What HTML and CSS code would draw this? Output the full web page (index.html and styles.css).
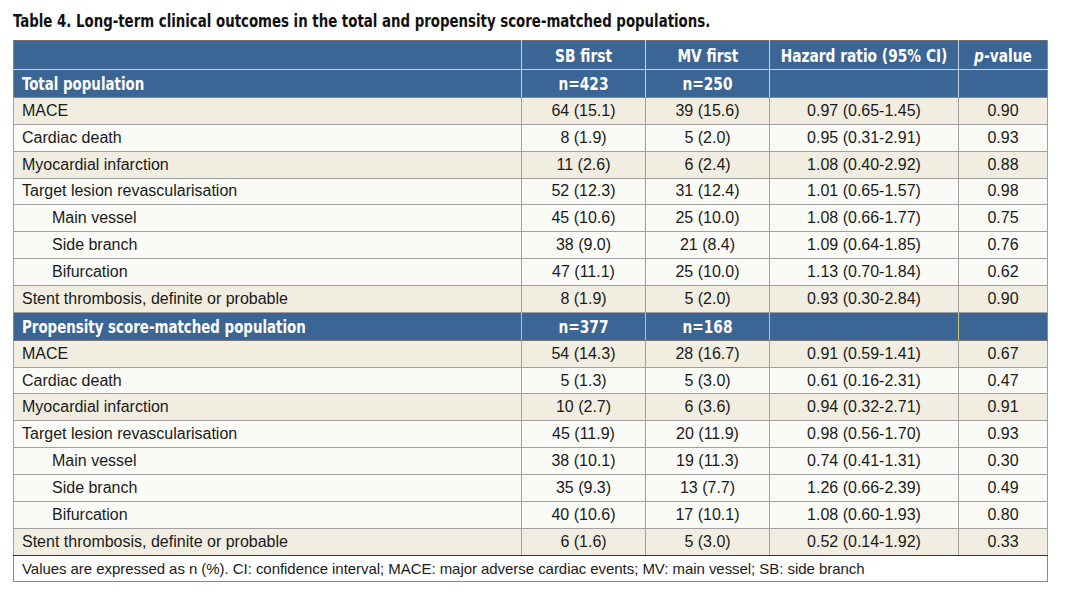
FILE: index.html
```html
<!DOCTYPE html>
<html lang="en">
<head>
<meta charset="utf-8">
<title>Table 4</title>
<link rel="stylesheet" href="styles.css">
</head>
<body>
<div class="page">
  <h1 class="caption"><span class="nar">Table 4. Long-term clinical outcomes in the total and propensity score-matched populations.</span></h1>
  <table class="outcomes">
    <colgroup>
      <col class="c-label"><col class="c-sb"><col class="c-mv"><col class="c-hr"><col class="c-p">
    </colgroup>
    <thead>
      <tr class="head">
        <th></th><th><span class="nar">SB first</span></th><th><span class="nar">MV first</span></th><th><span class="nar">Hazard ratio (95% CI)</span></th><th><span class="nar"><i>p</i>-value</span></th>
      </tr>
    </thead>
    <tbody>
      <tr class="group g1"><th class="lbl"><span class="nar">Total population</span></th><th><span class="nar">n=423</span></th><th><span class="nar">n=250</span></th><th></th><th></th></tr>
      <tr class="beige"><td class="lbl">MACE</td><td>64 (15.1)</td><td>39 (15.6)</td><td>0.97 (0.65-1.45)</td><td>0.90</td></tr>
      <tr class="white"><td class="lbl">Cardiac death</td><td>8 (1.9)</td><td>5 (2.0)</td><td>0.95 (0.31-2.91)</td><td>0.93</td></tr>
      <tr class="beige"><td class="lbl">Myocardial infarction</td><td>11 (2.6)</td><td>6 (2.4)</td><td>1.08 (0.40-2.92)</td><td>0.88</td></tr>
      <tr class="white"><td class="lbl">Target lesion revascularisation</td><td>52 (12.3)</td><td>31 (12.4)</td><td>1.01 (0.65-1.57)</td><td>0.98</td></tr>
      <tr class="white"><td class="lbl sub">Main vessel</td><td>45 (10.6)</td><td>25 (10.0)</td><td>1.08 (0.66-1.77)</td><td>0.75</td></tr>
      <tr class="white"><td class="lbl sub">Side branch</td><td>38 (9.0)</td><td>21 (8.4)</td><td>1.09 (0.64-1.85)</td><td>0.76</td></tr>
      <tr class="white"><td class="lbl sub">Bifurcation</td><td>47 (11.1)</td><td>25 (10.0)</td><td>1.13 (0.70-1.84)</td><td>0.62</td></tr>
      <tr class="beige"><td class="lbl">Stent thrombosis, definite or probable</td><td>8 (1.9)</td><td>5 (2.0)</td><td>0.93 (0.30-2.84)</td><td>0.90</td></tr>
      <tr class="group g2"><th class="lbl"><span class="nar">Propensity score-matched population</span></th><th><span class="nar">n=377</span></th><th><span class="nar">n=168</span></th><th></th><th></th></tr>
      <tr class="beige"><td class="lbl">MACE</td><td>54 (14.3)</td><td>28 (16.7)</td><td>0.91 (0.59-1.41)</td><td>0.67</td></tr>
      <tr class="white"><td class="lbl">Cardiac death</td><td>5 (1.3)</td><td>5 (3.0)</td><td>0.61 (0.16-2.31)</td><td>0.47</td></tr>
      <tr class="beige"><td class="lbl">Myocardial infarction</td><td>10 (2.7)</td><td>6 (3.6)</td><td>0.94 (0.32-2.71)</td><td>0.91</td></tr>
      <tr class="white"><td class="lbl">Target lesion revascularisation</td><td>45 (11.9)</td><td>20 (11.9)</td><td>0.98 (0.56-1.70)</td><td>0.93</td></tr>
      <tr class="white"><td class="lbl sub">Main vessel</td><td>38 (10.1)</td><td>19 (11.3)</td><td>0.74 (0.41-1.31)</td><td>0.30</td></tr>
      <tr class="white"><td class="lbl sub">Side branch</td><td>35 (9.3)</td><td>13 (7.7)</td><td>1.26 (0.66-2.39)</td><td>0.49</td></tr>
      <tr class="white"><td class="lbl sub">Bifurcation</td><td>40 (10.6)</td><td>17 (10.1)</td><td>1.08 (0.60-1.93)</td><td>0.80</td></tr>
      <tr class="beige last"><td class="lbl">Stent thrombosis, definite or probable</td><td>6 (1.6)</td><td>5 (3.0)</td><td>0.52 (0.14-1.92)</td><td>0.33</td></tr>
    </tbody>
    <tfoot>
      <tr class="foot"><td colspan="5">Values are expressed as n (%). CI: confidence interval; MACE: major adverse cardiac events; MV: main vessel; SB: side branch</td></tr>
    </tfoot>
  </table>
</div>
</body>
</html>
```

FILE: styles.css
```css
html, body {
  margin: 0;
  padding: 0;
  background: #ffffff;
}

.page {
  padding: 11px 0 0 13px;
}

.caption {
  margin: 0 0 9px 0;
  font-family: "DejaVu Sans Condensed", "Liberation Sans", sans-serif;
  font-weight: bold;
  font-size: 17px;
  line-height: 20px;
  color: #111111;
  white-space: nowrap;
}

.caption .nar {
  display: inline-block;
  transform: scaleX(0.872);
  transform-origin: left center;
}

.outcomes {
  border-collapse: collapse;
  table-layout: fixed;
  width: 1034px;
  font-family: "Liberation Sans", Arial, sans-serif;
  font-size: 16px;
  color: #1a1a1a;
  border: 1px solid #8a8a8a;
}

.c-label { width: 508px; }
.c-sb { width: 124px; }
.c-mv { width: 124px; }
.c-hr { width: 189px; }
.c-p { width: 89px; }

.outcomes td,
.outcomes th {
  border: 1px solid #a0a0a0;
  padding: 0 4px;
  height: 26.85px;
  text-align: center;
  white-space: nowrap;
  box-sizing: border-box;
}

.outcomes .lbl {
  text-align: left;
  padding-left: 8px;
}

.outcomes .sub {
  padding-left: 38px;
}

.head th,
.group th {
  background: #3b6594;
  color: #ffffff;
  font-family: "DejaVu Sans Condensed", "Liberation Sans", sans-serif;
  font-weight: bold;
  font-size: 18px;
  border-color: #c9d3e0;
}

.head .nar,
.group .nar {
  display: inline-block;
  margin: 0 -20px;
  transform: scaleX(0.85);
  transform-origin: center center;
}

.group .lbl .nar {
  margin: 0;
  transform-origin: left center;
  font-size: 17.5px;
}

.head th {
  height: 29px;
  border-top-color: #6f6f6f;
}

.head th:first-child {
  border-left-color: #8a8a8a;
}

.group th {
  height: 28px;
}

.g1 th {
  border-top-color: #c9d3e0;
  border-bottom-color: #8a8a8a;
}

.g2 th {
  border-color: #7a7a7a;
  border-left-color: #cfc66a;
  border-right-color: #cfc66a;
}

.group th:first-child {
  border-left-color: #8a8a8a;
}

.group th:last-child {
  border-right-color: #8a8a8a;
}

.head th:last-child {
  border-right-color: #8a8a8a;
}

.beige td {
  background: #f1ede0;
}

.white td {
  background: #fafaf7;
}

.last td {
  border-bottom: 1px solid #333333;
}

.foot td {
  background: #ffffff;
  text-align: left;
  padding-left: 8px;
  height: 26px;
  font-size: 15px;
  letter-spacing: -0.05px;
  border-color: #8a8a8a;
  border-top: 1px solid #333333;
}
```
